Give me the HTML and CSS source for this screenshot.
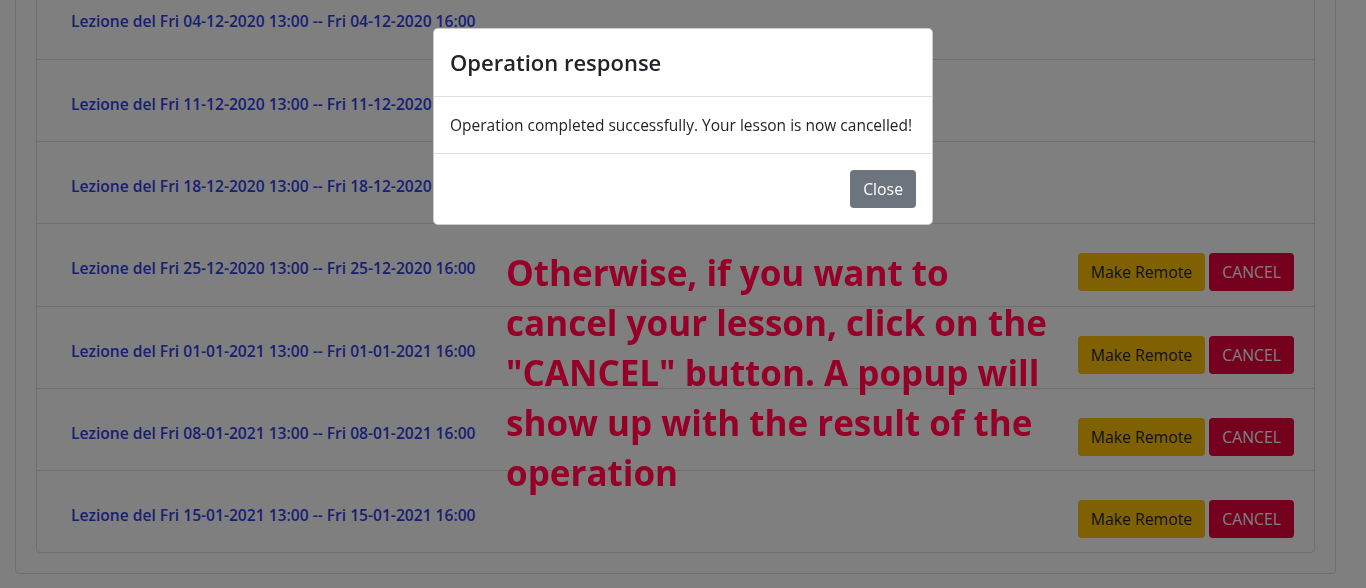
FILE: index.html
```html
<!DOCTYPE html>
<html lang="it">
<head>
<meta charset="utf-8">
<title>Lezioni</title>
<link rel="stylesheet" href="styles.css">
</head>
<body>
<div class="page">
  <div class="card">
    <ul class="lessons">
      <li class="lesson"><a class="lesson-link" href="#">Lezione del Fri 04-12-2020 13:00 -- Fri 04-12-2020 16:00</a></li>
      <li class="lesson"><a class="lesson-link" href="#">Lezione del Fri 11-12-2020 13:00 -- Fri 11-12-2020 16:00</a></li>
      <li class="lesson"><a class="lesson-link" href="#">Lezione del Fri 18-12-2020 13:00 -- Fri 18-12-2020 16:00</a></li>
      <li class="lesson"><a class="lesson-link" href="#">Lezione del Fri 25-12-2020 13:00 -- Fri 25-12-2020 16:00</a>
        <div class="actions"><button class="btn btn-warning">Make Remote</button><button class="btn btn-danger">CANCEL</button></div></li>
      <li class="lesson"><a class="lesson-link" href="#">Lezione del Fri 01-01-2021 13:00 -- Fri 01-01-2021 16:00</a>
        <div class="actions"><button class="btn btn-warning">Make Remote</button><button class="btn btn-danger">CANCEL</button></div></li>
      <li class="lesson"><a class="lesson-link" href="#">Lezione del Fri 08-01-2021 13:00 -- Fri 08-01-2021 16:00</a>
        <div class="actions"><button class="btn btn-warning">Make Remote</button><button class="btn btn-danger">CANCEL</button></div></li>
      <li class="lesson"><a class="lesson-link" href="#">Lezione del Fri 15-01-2021 13:00 -- Fri 15-01-2021 16:00</a>
        <div class="actions"><button class="btn btn-warning">Make Remote</button><button class="btn btn-danger">CANCEL</button></div></li>
    </ul>
  </div>
</div>
<div class="backdrop"></div>
<div class="modal">
  <div class="modal-header"><h4 class="modal-title">Operation response</h4></div>
  <div class="modal-body">Operation completed successfully. Your lesson is now cancelled!</div>
  <div class="modal-footer"><button class="btn btn-secondary">Close</button></div>
</div>
<p class="annotation">Otherwise, if you want to cancel your lesson, click on the "CANCEL" button. A popup will show up with the result of the operation</p>
</body>
</html>
```
FILE: styles.css
```css
html, body {
  margin: 0;
  padding: 0;
  height: 100%;
  overflow: hidden;
  background: #fff;
  font-family: "Open Sans", "Noto Sans", sans-serif;
  color: #212529;
}
.page {
  padding: 0 30px 0 15px;
}
.card {
  margin-top: -44px;
  border: 1px solid rgba(0,0,0,.125);
  border-radius: 4px;
  padding: 20px;
}
.lessons {
  list-style: none;
  margin: 0;
  padding: 0;
  border: 1px solid rgba(0,0,0,.125);
  border-radius: 4px;
}
.lesson {
  height: 82.2px;
  box-sizing: border-box;
  display: flex;
  align-items: flex-start;
  justify-content: space-between;
  padding: 29px 20px 0 34px;
  border-top: 1px solid rgba(0,0,0,.125);
}
.lesson:first-child { border-top: 0; height: 81px; padding-top: 28px; }
.lesson-link {
  margin-top: 3px;
  font-size: 15.6px;
  line-height: 24px;
  font-weight: 600;
  color: #3040e8;
  text-decoration: none;
}
.actions {
  display: flex;
  gap: 4px;
}
.btn {
  font-family: inherit;
  font-size: 15.8px;
  line-height: 24px;
  padding: 6px 12px;
  border: 1px solid transparent;
  border-radius: 4px;
}
.btn-warning { background: #ffc107; color: #212529; }
.btn-danger { background: #e8003c; color: #fff; }
.btn-secondary { background: #6c757d; color: #fff; }
.backdrop {
  position: fixed;
  inset: 0;
  background: rgba(0,0,0,.5);
}
.modal {
  position: fixed;
  top: 28px;
  left: 433px;
  width: 500px;
  box-sizing: border-box;
  background: #fff;
  border: 1px solid rgba(0,0,0,.2);
  border-radius: 5px;
}
.modal-header {
  padding: 16px;
  border-bottom: 1px solid #dee2e6;
}
.modal-title {
  margin: 0;
  font-size: 22px;
  line-height: 35px;
  font-weight: 600;
}
.modal-body {
  padding: 16px;
  font-size: 15.5px;
  line-height: 24px;
}
.modal-footer {
  display: flex;
  justify-content: flex-end;
  padding: 16px;
  border-top: 1px solid #dee2e6;
}
.annotation {
  position: fixed;
  left: 506px;
  top: 248px;
  width: 556px;
  margin: 0;
  font-size: 35px;
  line-height: 50px;
  font-weight: 700;
  color: #960028;
}
```
